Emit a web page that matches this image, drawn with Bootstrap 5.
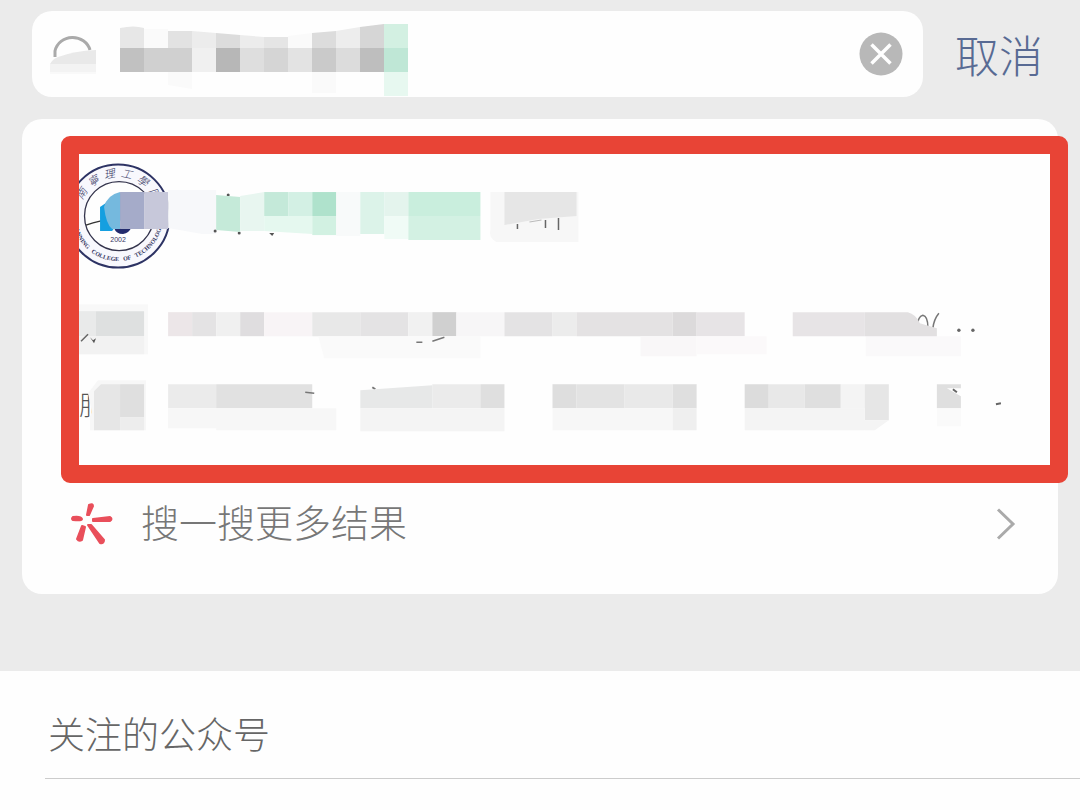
<!DOCTYPE html>
<html lang="zh-CN">
<head>
<meta charset="utf-8">
<meta name="viewport" content="width=device-width, initial-scale=1">
<title>搜索</title>
<link href="https://cdn.jsdelivr.net/npm/bootstrap@5.3.0/dist/css/bootstrap.min.css" rel="stylesheet">
<style>
  body { background: #fefefe; font-family: "Liberation Sans", "Noto Sans CJK SC", sans-serif; font-weight: 300; }
  .search-area { background: #ebebeb; padding: 11px 22px 77px; }
  .search-row { padding: 0 15px 0 10px; gap: 32px; margin-bottom: 22px; }
  .search-box { background: #fefefe; border-radius: 20px; height: 86px; padding: 0 20px 0 18px; }
  .search-box input { background: transparent; font-size: 38px; min-width: 0; }
  .search-box svg, .results svg { display: block; flex: none; }
  .redacted { margin-left: 20px; }
  .cancel { font-size: 44px; line-height: 60px; color: #586a93; font-weight: 300; }
  .results { background: #fefefe; border-radius: 20px; padding: 17px 0 29px 39px; }
  .marked { border: 18px solid #e84436; border-radius: 9px; margin-right: -10px; background: #e84436; }
  .marked svg { width: 100%; height: auto; background: #fefefe; }
  .more { height: 82px; padding: 0 42px 0 8px; color: #777; font-size: 38px; }
  .more:hover { color: #777; }
  .more-label { margin-left: 26px; }
  .followed { padding-left: 45px; }
  .followed h2 { font-size: 37px; line-height: 55px; font-weight: 300; color: #666; margin: 0; padding: 38px 0 14px 3px; border-bottom: 1px solid #ccc; }
</style>
</head>
<body>
<main>
  <section class="search-area">
    <form class="search-row d-flex align-items-center" role="search">
      <div class="search-box d-flex align-items-center flex-grow-1">
        <svg width="48" height="86" viewBox="50 11 48 86" aria-hidden="true">
          <path d="M55 57v-6a18 17 0 0 1 35-1" fill="none" stroke="#aaa" stroke-width="3"/>
          <path d="M48 70q2-10 10-13 16-6 38-7v22H48z" fill="#e9e9e9"/>
          <path d="M48 64h48v10H48z" fill="#f7f7f7" opacity=".7"/>
        </svg>
        <svg class="redacted" width="294" height="86" viewBox="118 11 294 86" aria-hidden="true">
          <path d="M120 28q14-3 24 0v20h-24z" fill="#e7e7e7"/>
          <path d="M144 29h24v19h-24z" fill="#fafafa"/>
          <path d="M168 31l24 0v17h-24z" fill="#e2e2e2"/>
          <path d="M192 31l24 2v15h-24z" fill="#ececec"/>
          <path d="M216 33l24 2v13h-24z" fill="#dcdcdc"/>
          <path d="M240 35l24 2v11h-24z" fill="#ececec"/>
          <path d="M264 37h24v11h-24z" fill="#e5e5e5"/>
          <path d="M288 36l24-3v15h-24z" fill="#fafafa"/>
          <path d="M312 33l24-2v17h-24z" fill="#dcdcdc"/>
          <path d="M336 31l24-4v21h-24z" fill="#ededed"/>
          <path d="M360 27l24-3v24h-24z" fill="#d6d6d6"/>
          <path d="M384 24h24v24h-24z" fill="#d3f0e2"/>
          <path d="M120 48h24v24h-24z" fill="#c1c1c1"/>
          <path d="M144 48h48v24h-48z" fill="#d0d0d0"/>
          <path d="M192 48h24v24h-24z" fill="#f0f0f0"/>
          <path d="M216 48h24v24h-24z" fill="#b7b7b7"/>
          <path d="M240 48h24v24h-24z" fill="#dedede"/>
          <path d="M264 48h24v24h-24z" fill="#d5d5d5"/>
          <path d="M288 48h24v24h-24z" fill="#e3e3e3"/>
          <path d="M312 48h24v24h-24z" fill="#cacaca"/>
          <path d="M336 48h24v24h-24z" fill="#dcdcdc"/>
          <path d="M360 48h24v24h-24z" fill="#bebebe"/>
          <path d="M384 48h24v24h-24z" fill="#bfe7d6"/>
          <path d="M384 72h24v24h-24z" fill="#e7f8f0"/>
          <path d="M168 72h24v17l-24-4zM312 72h24v21h-24z" fill="#fafafa"/>
        </svg>
        <input class="form-control border-0 shadow-none flex-grow-1 p-0" type="text" aria-label="搜索">
        <button class="btn p-0 border-0" type="reset" aria-label="清除">
          <svg width="44" height="44" viewBox="0 0 44 44" aria-hidden="true"><circle cx="22" cy="22" r="21.500" fill="#b8b8b8"/><path d="M12.500 12.500l19 19m0-19l-19 19" stroke="#fff" stroke-width="3.500"/></svg>
        </button>
      </div>
      <button class="cancel btn p-0 pt-2 border-0 rounded-0 text-nowrap flex-shrink-0" type="button">取消</button>
    </form>

    <div class="results">
      <div class="marked">
        <svg viewBox="79 154 970 311" role="img" aria-label="搜索结果">
          <defs>
            <path id="sealTop" d="M79 216a39 39 0 0 1 78 0"/>
            <path id="sealBottom" d="M73 216a45 45 0 0 0 90 0"/>
          </defs>
          <!-- college seal -->
          <circle cx="118" cy="216" r="51.500" fill="#f8f8fd" stroke="#2d3364" stroke-width="2"/>
          <circle cx="119" cy="216" r="34.500" fill="#fefefe" stroke="#34344c" stroke-width="1.300"/>
          <g fill="#33355f" text-anchor="middle">
            <text font-family="Noto Sans CJK SC, sans-serif" font-size="11" font-style="italic"><textPath href="#sealTop" startOffset="50%">南&#160;&#160;寧&#160;&#160;理&#160;&#160;工&#160;&#160;學&#160;&#160;院</textPath></text>
            <text font-family="Liberation Serif, serif" font-size="6" font-weight="700"><textPath href="#sealBottom" startOffset="50%">NANNING&#160;&#160;&#160;COLLEGE&#160;&#160;&#160;OF&#160;&#160;&#160;TECHNOLOGY</textPath></text>
            <text x="118" y="242" font-family="Liberation Sans, sans-serif" font-size="7">2002</text>
          </g>
          <path d="M86 225q14-5 28-6" fill="none" stroke="#333" stroke-width="1.200"/>
          <path d="M100 207l22-15v27l-10 12h-12z" fill="#159fe0"/>
          <path d="M114 228h17q-2 5-8 6-7 0-9-6z" fill="#232b6d"/>
          <path d="M104 207q3-12 16-15v37h-8q-6-5-8-22z" fill="#75b9de"/>
          <path d="M120 192h24v37h-24z" fill="#a5abc9"/>
          <path d="M144 192h24v37h-24z" fill="#c7c8da"/>
          <path d="M168 190h48v44h-14l-34-6z" fill="#f7f8fa"/>
          <!-- pixelated account name -->
          <g fill="#555"><circle cx="228" cy="195" r="1.500"/><circle cx="215" cy="231" r="1.500"/><circle cx="239" cy="233" r="1.500"/><path d="M269 233h5l-2 3z"/></g>
          <path d="M216 195l24 2v35l-24-2z" fill="#c5ead9"/>
          <path d="M240 196l24-4v39h-24z" fill="#e8f6f0"/>
          <path d="M264 192h24v24h-24z" fill="#c4e9d9"/>
          <path d="M288 192h24v24h-24z" fill="#d3f0e4"/>
          <path d="M312 192h24v24h-24z" fill="#afe2cc"/>
          <path d="M264 216h48v18l-48-3z" fill="#e5f8ef"/>
          <path d="M312 216h24v19h-24z" fill="#d2f1e2"/>
          <path d="M336 192h24v44h-24z" fill="#f8fafa"/>
          <path d="M360 192h24v42h-24z" fill="#dcf3e9"/>
          <path d="M384 192h24v24h-24z" fill="#e4f4ed"/>
          <path d="M384 216h24v23h-24z" fill="#f0fbf6"/>
          <path d="M408 192h72v24h-72z" fill="#c9eedd"/>
          <path d="M408 216h72v24h-72z" fill="#d3f1e3"/>
          <path d="M490 192h88v50h-82q-8-4-6-12z" fill="#f7f7f7"/>
          <path d="M504 192h72v24l-38 3-34 6z" fill="#e6e6e6"/>
          <path d="M517 224v5M545 220v8M558 218v12" fill="none" stroke="#666" stroke-width="1.500"/>
          <path d="M529 222l12-2" stroke="#bbb"/>
          <!-- first description line -->
          <path d="M79 304h69v50H79z" fill="#f8f8f8"/>
          <path d="M79 311h17v25H79z" fill="#e9eaea"/>
          <path d="M96 311h48v25H96z" fill="#dee0e0"/>
          <path d="M79 336h65v18H79z" fill="#f2f2f2"/>
          <path d="M81 341l7-7" stroke="#666" stroke-width="1.500"/>
          <path d="M90 337l3 3 3-2-2 5z" fill="#555"/>
          <path d="M168 312h24v24h-24z" fill="#ece6e8"/>
          <path d="M192 312h24v24h-24z" fill="#e4e3e4"/>
          <path d="M216 312h24v24h-24z" fill="#f0f0f0"/>
          <path d="M240 312h24v24h-24z" fill="#dfdddf"/>
          <path d="M264 312h48v24h-48z" fill="#f8f4f6"/>
          <path d="M312 312h48v24h-48z" fill="#e8e8e8"/>
          <path d="M360 312h48v24h-48z" fill="#e4e3e4"/>
          <path d="M408 312h24v24h-24z" fill="#f1f1f1"/>
          <path d="M432 312h24v24h-24z" fill="#d0d0d0"/>
          <path d="M456 312h48v24h-48z" fill="#f7f6f7"/>
          <path d="M318 336h162v22H324z" fill="#fafafa"/>
          <path d="M416 342h6M432 341l12-4" fill="none" stroke="#777" stroke-width="1.500"/>
          <path d="M504 312h48v24h-48z" fill="#e4e3e4"/>
          <path d="M552 312h24v24h-24z" fill="#ececec"/>
          <path d="M576 312h96v24h-96z" fill="#e4e2e3"/>
          <path d="M672 312h24v24h-24z" fill="#dcdadb"/>
          <path d="M696 312h48v24h-48z" fill="#e7e4e6"/>
          <path d="M640 336h56v20h-56z" fill="#f9f7f8"/>
          <path d="M696 336h70v18h-70z" fill="#fbf9fa"/>
          <path d="M865 336h95v20h-95z" fill="#faf9fa"/>
          <path d="M916 327q1-11 6-12 5 1 5 12M932 328q1-9 6-15" fill="none" stroke="#777" stroke-width="1.500"/>
          <path d="M792 312h72v24h-72z" fill="#e7e4e6"/>
          <path d="M864 312h43q8 2 12 11l17 5v8h-72z" fill="#e2e0e1"/>
          <g fill="#666"><circle cx="958" cy="330" r="1.700"/><circle cx="972" cy="330" r="1.700"/></g>
          <!-- second description line -->
          <text x="79" y="415" font-family="Noto Sans CJK SC, sans-serif" font-size="26" font-weight="300" fill="#555">服</text>
          <path d="M88 393l10-13h48v50H90v-14l2-4z" fill="#f7f7f7"/>
          <path d="M94 391l7-7h19v46H94z" fill="#e6e6e6"/>
          <path d="M120 384h24v33h-24z" fill="#dfdfdf"/>
          <path d="M120 417h24v13h-24z" fill="#ededed"/>
          <path d="M168 384h48v24h-48z" fill="#ebebeb"/>
          <path d="M216 384h96v24h-96z" fill="#e1e1e1"/>
          <path d="M168 408h48v20h-48zM216 408h120v22H216z" fill="#f7f7f7"/>
          <path d="M305 392l9 1" stroke="#777" stroke-width="1.500"/>
          <path d="M372 387l3 2" stroke="#777" stroke-width="2"/>
          <path d="M360 390l72-5v23h-72z" fill="#e7e8e8"/>
          <path d="M432 384h48v24h-48z" fill="#ebebeb"/>
          <path d="M480 384h24v24h-24z" fill="#dfdfdf"/>
          <path d="M360 408h144v23H360z" fill="#f4f4f4"/>
          <path d="M552 384h24v24h-24z" fill="#dedede"/>
          <path d="M576 384h48v24h-48z" fill="#e3e3e3"/>
          <path d="M624 384h48v24h-48z" fill="#e9e9e9"/>
          <path d="M672 384h24v24h-24z" fill="#dfdfdf"/>
          <path d="M552 408h120v22H552z" fill="#f7f7f7"/>
          <path d="M672 408h24v22h-24z" fill="#efefef"/>
          <path d="M744 384h24v24h-24z" fill="#dcdcdc"/>
          <path d="M768 384h36v24h-36z" fill="#e8e8e8"/>
          <path d="M804 384h36v24h-36z" fill="#dfdfdf"/>
          <path d="M840 384h24v24h-24z" fill="#f4f4f4"/>
          <path d="M864 384h24v36h-24z" fill="#e6e6e6"/>
          <path d="M744 408h120v22H744zM864 420h24l-14 10h-10z" fill="#f4f4f4"/>
          <path d="M936 384h24v4h-14l14 8v12h-24z" fill="#dfdfdf"/>
          <path d="M936 408h24v18h-24z" fill="#fafafa"/>
          <path d="M952 389l4 3M995 404l5-1" stroke="#666" stroke-width="2"/>
        </svg>
      </div>
      <a href="#" class="more d-flex align-items-center text-decoration-none">
        <svg width="46" height="46" viewBox="69 501 46 46" aria-hidden="true">
          <g fill="#e94f5b" stroke="#e94f5b" stroke-width="2" stroke-linejoin="round">
            <path d="M89 505q4-2 4 1l-4 9h-2z"/>
            <path d="M93 519l17-2q3 2 0 4l-17 0z"/>
            <path d="M73 517q8-1 9 2 0 2-9 1-2-1 0-3z"/>
            <path d="M82 526l3 1-3 13q-3 2-5-1z"/>
            <path d="M88 525l3 0 13 15q0 4-4 3z"/>
          </g>
        </svg>
        <span class="more-label flex-grow-1">搜一搜更多结果</span>
        <svg width="20" height="34" viewBox="0 0 20 34" aria-hidden="true"><path d="M2 2.500l15 14.500L2 31.500" fill="none" stroke="#aaa" stroke-width="3"/></svg>
      </a>
    </div>
  </section>
  <section class="followed"><h2>关注的公众号</h2></section>
</main>
<script src="https://cdn.jsdelivr.net/npm/bootstrap@5.3.0/dist/js/bootstrap.bundle.min.js"></script>
</body>
</html>
